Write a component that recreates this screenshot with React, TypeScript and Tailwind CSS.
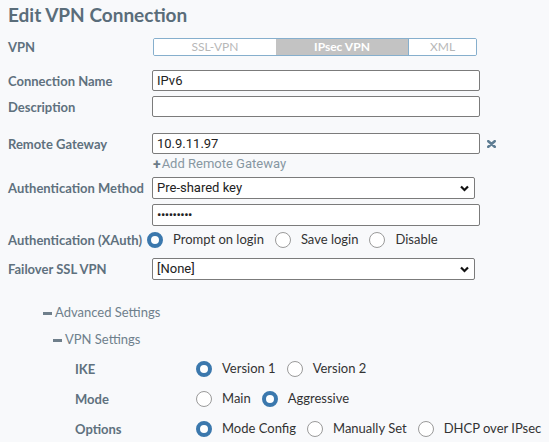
import type { ReactNode } from 'react';

const label = "text-[13px] font-bold text-[#5f717e]";
const field = "h-full rounded-[2px] border border-[#7b7b7b] bg-white pl-[4px] font-['Roboto'] text-[13px] text-[#222] flex items-center";

function Radio({ checked }: { checked?: boolean }) {
    return checked ? (
        <span className="box-border size-[16px] shrink-0 rounded-full border-[4px] border-[#3b78ad] bg-white" />
    ) : (
        <span className="box-border size-[16px] shrink-0 rounded-full border border-[#9a9a9a] bg-white" />
    );
}

function RadioGroup({ options }: { options: { text: string; checked?: boolean }[] }) {
    return (
        <div className="flex shrink-0 items-center whitespace-nowrap">
            {options.map((o) => (
                <div key={o.text} className="mr-[11px] flex shrink-0 items-center">
                    <Radio checked={o.checked} />
                    <span className="ml-[10px] text-[13px] text-[#333]">{o.text}</span>
                </div>
            ))}
        </div>
    );
}

function Row({ name, className, children }: { name: string; className: string; children: ReactNode }) {
    return (
        <div className={`flex items-center ${className}`}>
            <div className={`w-[144px] shrink-0 pt-[2px] ${label}`}>{name}</div>
            {children}
        </div>
    );
}

function Chevron() {
    return (
        <svg width="9" height="7" viewBox="0 0 9 7" className="ml-auto mr-[5px]">
            <path d="M1 1.5 L4.5 5 L8 1.5" fill="none" stroke="#111" strokeWidth="2.2" />
        </svg>
    );
}

function Dash() {
    return <span className="mr-[3px] inline-block h-[3px] w-[9px] bg-[#6f7f8b]" />;
}

export default function App() {
    return (
        <div className="min-h-screen bg-[#f8f9fb] pl-[8px] font-['Lato',sans-serif]">
            <h1 className="h-[30px] text-[19px] font-bold leading-[30px] text-[#5a6d7a]">Edit VPN Connection</h1>

            <Row name="VPN" className="mt-[8px] h-[18px]">
                <div className="ml-[1px] flex h-full w-[324px] overflow-hidden rounded-[2px] border border-[#86afcd] text-[12px] text-[#b7b7b7]">
                    <div className="flex w-[122px] items-center justify-center bg-white">SSL-VPN</div>
                    <div className="flex w-[132px] items-center justify-center bg-[#c3c3c3] font-bold text-white">IPsec VPN</div>
                    <div className="flex flex-1 items-center justify-center border-l border-[#86afcd] bg-white">XML</div>
                </div>
            </Row>

            <Row name="Connection Name" className="mt-[14px] h-[21px]">
                <div className={`${field} w-[328px]`}>IPv6</div>
            </Row>
            <Row name="Description" className="mt-[5px] h-[21px]">
                <div className={`${field} w-[328px]`} />
            </Row>

            <Row name="Remote Gateway" className="mt-[16px] h-[21px]">
                <div className={`${field} w-[328px]`}>10.9.11.97</div>
                <svg width="9" height="8" viewBox="0 0 9 8" className="ml-[7px]">
                    <path d="M1.3 1.2 L7.7 6.8 M7.7 1.2 L1.3 6.8" stroke="#5e7d93" strokeWidth="2.6" strokeLinecap="round" />
                </svg>
            </Row>
            <div className="mt-[1px] flex h-[18px] items-center pl-[145px] font-['Roboto'] text-[13px] text-[#8797a2]">
                <span className="mr-[1px] text-[14px] font-bold text-[#6c7c88]">+</span>Add Remote Gateway
            </div>

            <Row name="Authentication Method" className="mt-[4px] h-[22px]">
                <div className={`${field} w-[323px]`}>
                    Pre-shared key
                    <Chevron />
                </div>
            </Row>
            <Row name="" className="mt-[5px] h-[22px]">
                <div className={`${field} w-[328px] text-[10px] tracking-[-0.5px]`}>•••••••••</div>
            </Row>

            <Row name="Authentication (XAuth)" className="mt-[5px] h-[18px]">
                <div className="-ml-[5px]">
                    <RadioGroup
                        options={[{ text: 'Prompt on login', checked: true }, { text: 'Save login' }, { text: 'Disable' }]}
                    />
                </div>
            </Row>

            <Row name="Failover SSL VPN" className="mt-[9px] h-[22px]">
                <div className={`${field} w-[323px]`}>
                    [None]
                    <Chevron />
                </div>
            </Row>

            <div className="mt-[24px] flex h-[18px] items-center pl-[35px] text-[13px] text-[#6f808c]">
                <Dash />
                Advanced Settings
            </div>
            <div className="mt-[9px] flex h-[18px] items-center pl-[45px] text-[13px] text-[#6f808c]">
                <Dash />
                VPN Settings
            </div>

            {[
                { name: 'IKE', mt: 'mt-[11px]', options: [{ text: 'Version 1', checked: true }, { text: 'Version 2' }] },
                { name: 'Mode', mt: 'mt-[12px]', options: [{ text: 'Main' }, { text: 'Aggressive', checked: true }] },
                {
                    name: 'Options',
                    mt: 'mt-[12px]',
                    options: [{ text: 'Mode Config', checked: true }, { text: 'Manually Set' }, { text: 'DHCP over IPsec' }],
                },
            ].map((r) => (
                <div key={r.name} className={`flex h-[18px] items-center pl-[67px] ${r.mt}`}>
                    <div className={`w-[121px] shrink-0 pt-[2px] ${label}`}>{r.name}</div>
                    <RadioGroup options={r.options} />
                </div>
            ))}
        </div>
    );
}
